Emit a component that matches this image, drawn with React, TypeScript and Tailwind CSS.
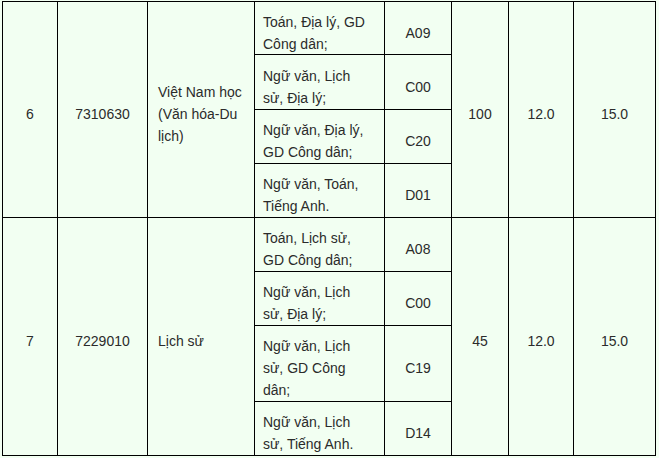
import React from "react";

type Combo = { subjects: string; code: string };

type Major = {
  no: string;
  id: string;
  name: string;
  quota: string;
  floor: string;
  score: string;
  combos: Combo[];
};

const majors: Major[] = [
  {
    no: "6",
    id: "7310630",
    name: "Việt Nam học (Văn hóa-Du lịch)",
    quota: "100",
    floor: "12.0",
    score: "15.0",
    combos: [
      { subjects: "Toán, Địa lý, GD Công dân;", code: "A09" },
      { subjects: "Ngữ văn, Lịch sử, Địa lý;", code: "C00" },
      { subjects: "Ngữ văn, Địa lý, GD Công dân;", code: "C20" },
      { subjects: "Ngữ văn, Toán, Tiếng Anh.", code: "D01" },
    ],
  },
  {
    no: "7",
    id: "7229010",
    name: "Lịch sử",
    quota: "45",
    floor: "12.0",
    score: "15.0",
    combos: [
      { subjects: "Toán, Lịch sử, GD Công dân;", code: "A08" },
      { subjects: "Ngữ văn, Lịch sử, Địa lý;", code: "C00" },
      { subjects: "Ngữ văn, Lịch sử, GD Công dân;", code: "C19" },
      { subjects: "Ngữ văn, Lịch sử, Tiếng Anh.", code: "D14" },
    ],
  },
];

// ô bảng nền xanh nhạt, đường kẻ là khe 1px của lưới nền đen
const box = "bg-[#f2fff2] flex items-center pt-[9px]";
const mid = `${box} justify-center text-center`;
const span = `${mid} row-span-4`;

export default function App() {
  return (
    <div
      className="min-h-screen w-full bg-[#f2fff2] pl-[2px] pt-[1px] text-[14px] leading-[22px] text-[#2b2b2b]"
      style={{ fontFamily: '"Liberation Sans", Arial, sans-serif' }}
    >
      <div className="grid w-max gap-px border border-black bg-black grid-cols-[54px_89px_106px_129px_66px_56px_64px_81px] grid-rows-[52px_54px_53px_53px_53px_53px_75px_53px]">
        {majors.map((m) =>
          m.combos.map((c, i) => (
            <React.Fragment key={m.no + c.code}>
              {i === 0 && (
                <>
                  <div className={span}>{m.no}</div>
                  <div className={span}>{m.id}</div>
                  <div className={`${box} row-span-4 pl-[10px] pr-[5px]`}>{m.name}</div>
                </>
              )}
              <div className={`${box} pl-[8px] pr-[10px]`}>{c.subjects}</div>
              <div className={mid}>{c.code}</div>
              {i === 0 && (
                <>
                  <div className={span}>{m.quota}</div>
                  <div className={span}>{m.floor}</div>
                  <div className={span}>{m.score}</div>
                </>
              )}
            </React.Fragment>
          ))
        )}
      </div>
    </div>
  );
}
